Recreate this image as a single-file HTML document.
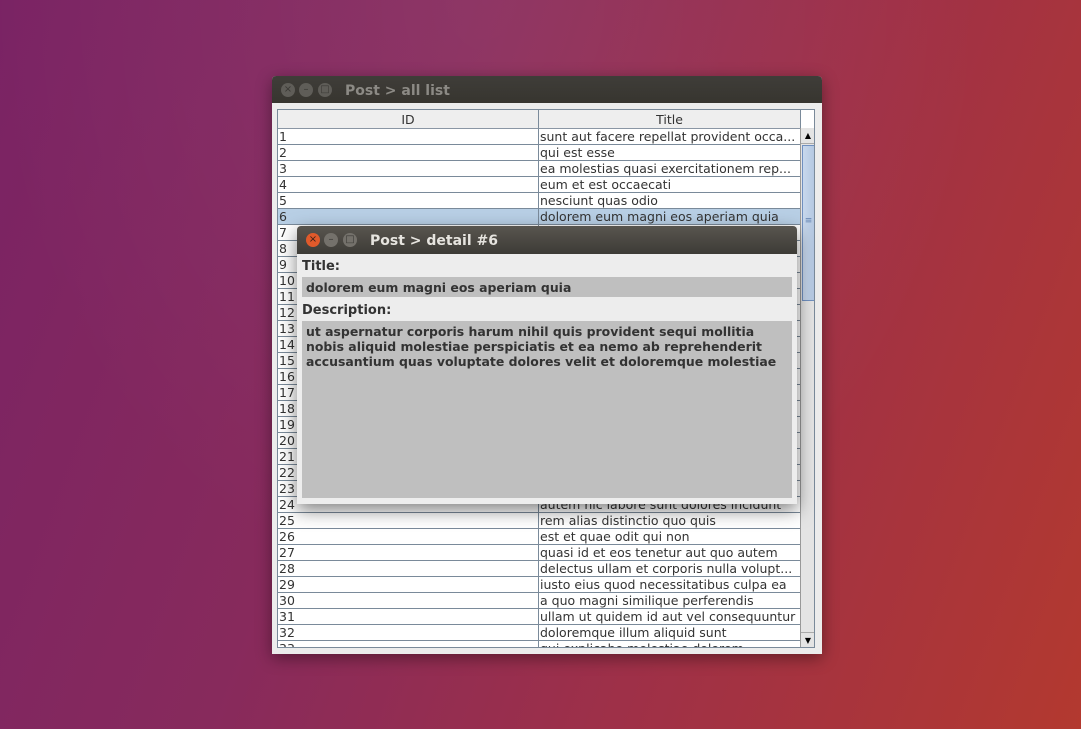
<!DOCTYPE html>
<html><head><style>
*{margin:0;padding:0;box-sizing:border-box}
body{width:1081px;height:729px;overflow:hidden;position:relative;font-family:"DejaVu Sans","Liberation Sans",sans-serif;
background:radial-gradient(ellipse at 45% 0%,rgba(255,255,255,.06),rgba(0,0,0,0) 60%),linear-gradient(110deg,#7a2364 0%,#872a5c 35%,#9e3048 65%,#b3392f 100%);}
.win{position:absolute;left:272px;top:76px;width:550px;height:578px;background:#ececec;box-shadow:0 4px 16px rgba(0,0,0,.4);border-radius:4px 4px 0 0}
.tb{height:27px;background:linear-gradient(#3f3d39,#37352f);border-radius:4px 4px 0 0;position:relative}
.tt{position:absolute;left:73px;top:7px;color:#8c8a85;font-weight:bold;font-size:14px}
.btn{position:absolute;top:7px;width:14px;height:14px;border-radius:50%;background:#5f5d58;color:#3a3834;font-size:10px;line-height:14px;text-align:center}
.tbl{position:absolute;left:5px;top:33px;width:538px;height:539px;border:1px solid #7a8a9a;background:#fff;overflow:hidden}
.hd{position:absolute;top:0;height:19px;background:#eee;border-right:1px solid #7a8a9a;border-bottom:1px solid #8a96a4;font-size:12.5px;color:#333;text-align:center;line-height:19px}
.row{position:absolute;left:0;width:522px;height:16px;border-bottom:1px solid #7a8a9a;font-size:12.5px;color:#333;line-height:15px;white-space:nowrap}
.row span{position:absolute;top:0}
.c1{left:1px}.c2{left:262px}
.row .sep{position:absolute;left:260px;top:0;width:1px;height:16px;background:#7a8a9a}
.sb{position:absolute;left:522px;top:18px;width:15px;height:520px;background:#e4e4e4;border-left:1px solid #999}
.d{position:absolute;left:297px;top:226px;width:500px;height:278px;background:#ededed;box-shadow:0 6px 18px rgba(0,0,0,.5);border-radius:5px 5px 0 0}
.d .tb{height:28px;background:linear-gradient(#58554f,#3d3b36)}
.lbl{position:absolute;left:5px;font-size:13px;font-weight:bold;color:#333}
.fld{position:absolute;left:5px;width:490px;background:#bfbfbf;font-size:12.45px;font-weight:bold;color:#333;padding-left:4px;white-space:nowrap}
</style></head><body>
<div class="win">
<div class="tb"><div class="btn" style="left:9px">×</div><div class="btn" style="left:27px">–</div><div class="btn" style="left:46px">□</div><div class="tt">Post &gt; all list</div></div>
<div class="tbl">
<div class="hd" style="left:0;width:261px">ID</div>
<div class="hd" style="left:261px;width:262px">Title</div>
<div id="rows"></div>
<div class="sb">
<div style="height:16px;border-bottom:1px solid #aaa;font-size:8px;text-align:center;line-height:16px">▲</div>
<div style="position:absolute;top:17px;left:1px;width:13px;height:156px;background:linear-gradient(90deg,#c8d8ec,#b4c8e2);border:1px solid #7090c0;font-size:9px;color:#6080b0;text-align:center;line-height:150px">≡</div>
<div style="position:absolute;bottom:0;height:16px;width:14px;border-top:1px solid #aaa;font-size:8px;text-align:center;line-height:16px">▼</div>
</div>
</div>
</div>
<div class="d">
<div class="tb"><div class="btn" style="left:9px;top:7px;background:#e05a2b;color:#3a2018">×</div><div class="btn" style="left:27px;top:7px;background:#74716b">–</div><div class="btn" style="left:46px;top:7px;background:#74716b">□</div><div class="tt" style="color:#e6e4df;top:7px">Post &gt; detail #6</div></div>
<div class="lbl" style="top:33px">Title:</div>
<div class="fld" style="top:51px;height:20px;line-height:21px">dolorem eum magni eos aperiam quia</div>
<div class="lbl" style="top:77px">Description:</div>
<div class="fld" style="top:95px;height:177px;line-height:15px;padding-top:3px">ut aspernatur corporis harum nihil quis provident sequi mollitia<br>nobis aliquid molestiae perspiciatis et ea nemo ab reprehenderit<br>accusantium quas voluptate dolores velit et doloremque molestiae</div>
</div>
<script>
var t=["sunt aut facere repellat provident occa...","qui est esse","ea molestias quasi exercitationem rep...","eum et est occaecati","nesciunt quas odio","dolorem eum magni eos aperiam quia","","","","","","","","","","","","","","","","","","autem hic labore sunt dolores incidunt","rem alias distinctio quo quis","est et quae odit qui non","quasi id et eos tenetur aut quo autem","delectus ullam et corporis nulla volupt...","iusto eius quod necessitatibus culpa ea","a quo magni similique perferendis","ullam ut quidem id aut vel consequuntur","doloremque illum aliquid sunt","qui explicabo molestiae dolorem"];
var h="";for(var i=0;i<33;i++){var bg=i==5?"background:#b8cfe5;":"";h+='<div class="row" style="top:'+(19+i*16)+'px;'+bg+'"><span class="c1">'+(i+1)+'</span><div class="sep"></div><span class="c2">'+t[i]+'</span></div>';}
document.getElementById("rows").innerHTML=h;
</script>
</body></html>
